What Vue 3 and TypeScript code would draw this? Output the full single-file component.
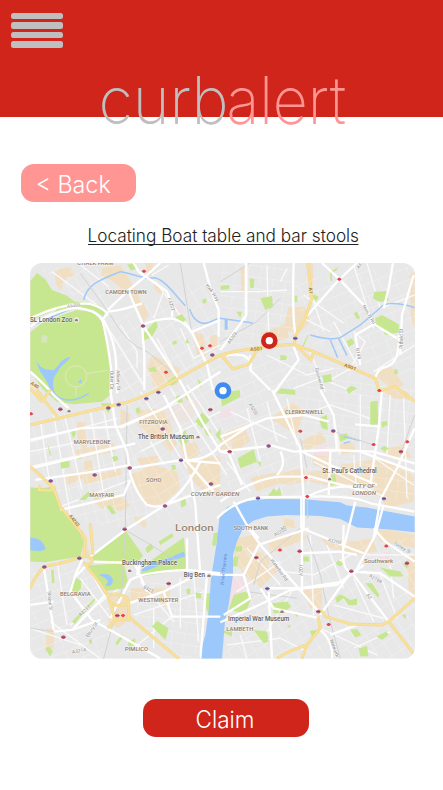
<script setup lang="ts">
interface Label { t: string; x: number; y: number; w: number; r?: number; k?: string }

// Map geometry is in map units, three to a pixel.
const districts: { p: string; f: string }[] = [
  { p: '30,500 290,440 345,590 420,790 330,820 180,800 90,680 30,620', f: 'west' },
  { p: '290,340 600,300 620,700 440,800 350,650', f: 'diag' },
  { p: '600,300 820,290 850,720 620,720', f: 'diag2' },
  { p: '820,280 1183,400 1183,740 850,720', f: 'west2' },
  { p: '600,24 820,24 820,260 600,280', f: 'west2' },
  { p: '270,200 560,60 600,290 380,410 290,410', f: 'diag' },
  { p: '820,80 1183,24 1183,370 850,260', f: 'diag2' },
  { p: '30,940 200,930 300,1090 240,1211 30,1211', f: 'diag2' },
  { p: '320,990 560,950 550,1200 480,1211 340,1090', f: 'west2' },
  { p: '650,870 1183,850 1183,1211 620,1211', f: 'diag' },
  { p: '60,40 260,40 290,180 180,140', f: 'diag' },
]

const buildings: string[] = [
  '105,45 150,35 165,65 140,65 120,105 105,85', '245,40 300,30 350,110 370,160 350,165 325,120 280,80 240,60',
  '375,24 400,24 390,65 380,55', '400,80 435,105 430,125 400,100', '515,230 550,240 560,310 530,300', '570,240 590,240 590,285 568,285',
  '350,150 370,145 385,180 370,200', '395,300 480,340 470,390 400,395 380,340', '660,40 675,35 678,110 664,115',
  '805,155 855,155 870,200 830,240 790,220', '720,235 800,205 805,250 730,265', '860,24 878,24 880,90 866,90', '1168,60 1183,50 1183,220 1172,200',
  '1060,360 1110,330 1150,390 1120,405', '1070,400 1160,410 1183,435 1120,430', '300,460 330,480 320,520 300,510',
  '355,465 430,460 450,530 400,550 350,510', '400,510 445,490 470,570 450,595 415,545', '170,500 195,500 200,590 170,560',
  '165,585 280,565 285,590 170,610', '190,620 215,615 220,660 300,640 305,660 190,690', '130,660 185,645 190,670 140,690', '330,655 400,630 470,650 480,700 430,745 385,755 350,710',
  '490,620 600,600 600,720 560,720 520,680', '475,570 525,560 540,595 500,620', '350,610 420,600 410,625 360,630', '215,705 255,730 250,765 220,740',
  '240,745 300,720 330,750 300,770', '620,530 670,510 690,560 640,590', '750,490 820,440 850,470 830,540 780,510', '840,560 900,530 920,560 860,585',
  '600,540 625,530 630,580 600,590', '690,670 780,650 790,680 710,710', '700,665 850,640 860,680 800,690', '870,600 930,590 925,640 880,630',
  '860,650 1000,640 1010,680 960,700 870,680', '960,630 1080,610 1180,660 1180,740 1100,760 1060,700 990,690', '1090,580 1150,570 1175,610 1100,610',
  '950,570 1000,560 1005,590 960,600', '645,850 700,840 720,870 640,930', '640,910 720,890 750,910 740,950 700,990 650,930', '790,790 820,795 825,820 790,815',
  '740,860 840,830 860,850 750,895', '900,850 1000,860 1060,850 1070,890 1010,900 930,880', '1060,815 1183,840 1183,880 1080,860', '1160,900 1183,900 1183,1020 1165,1010',
  '280,1050 320,1035 335,1090 290,1120 260,1100', '260,1020 325,1020 330,1045 280,1040', '330,1000 450,1000 445,1050 430,1060 415,1020 330,1040',
  '80,1120 100,1120 100,1180 75,1190', '165,810 190,830 210,900 190,905', '340,780 380,800 375,820 345,800', '705,970 770,920 780,940 720,1000', '845,1000 905,1000 905,1060 870,1060',
]

const parks: string[] = [
  '30,78 50,54 75,73 95,105 140,122 172,148 115,158 62,182 30,198', '125,140 190,140 235,150 255,165 250,185 220,165 170,155 90,190',
  '30,232 62,206 120,182 170,165 220,172 244,200 260,250 270,340 268,420 245,440 160,448 110,440 65,400 30,350',
  '30,697 62,700 92,695 120,755 175,828 190,860 180,905 72,922 30,920', '315,826 368,902 345,932 222,918 214,906', '202,932 310,924 322,975 312,1000 258,1008 225,970',
  '360,955 398,912 490,848 500,942 355,966', '365,240 408,195 412,215 395,245 370,258', '465,185 485,178 498,195 480,205', '545,135 556,130 560,142 549,147',
  '500,250 508,265 495,265', '440,380 465,360 475,378 455,392', '385,340 405,335 410,350 390,350', '530,370 545,385 540,400', '455,260 468,255 470,265 460,270',
  '320,29 345,24 350,42 332,46', '720,130 755,123 758,155 735,165', '648,170 665,170 660,188', '688,70 702,72 700,98 690,100', '600,92 628,90 625,103 602,105', '880,118 896,125 888,138 878,130',
  '822,122 831,122 831,142 823,142', '930,50 955,35 950,45 935,55 935,77 930,77', '1062,110 1100,108 1105,138 1075,140 1058,130', '1065,190 1085,180 1135,208 1137,232 1095,240 1085,222 1065,218',
  '1000,175 1010,170 1020,190 1010,192', '978,258 995,250 1003,265 985,276', '845,275 862,240 865,240 850,275', '780,300 800,302 797,315 780,315', '700,280 720,272 722,287 702,290',
  '905,362 932,357 935,380 910,383', '978,402 993,392 1010,400 985,417', '1122,343 1132,343 1132,357 1122,357', '768,415 782,400 825,405 825,420', '600,415 658,405 660,425 605,455',
  '1050,440 1072,437 1072,465 1077,508 1050,510', '1083,500 1100,498 1102,510 1085,518', '895,490 920,480 922,525 905,520', '955,540 980,535 985,550 960,560', '1080,580 1092,573 1105,580 1093,590',
  '652,610 700,583 710,620 660,640', '710,620 722,620 722,635', '745,720 760,700 770,710 778,695 785,728 745,730', '928,660 945,658 948,690 925,690',
  '525,500 545,472 568,495 545,520', '550,520 570,525 575,545 558,540', '475,555 495,523 505,560 485,572', '465,425 480,420 488,440 475,445', '490,415 502,412 512,430 500,435',
  '585,540 600,520 602,560', '150,523 165,523 166,540 158,550', '175,735 205,710 210,720 195,735', '120,622 147,618 148,636 122,641', '275,607 282,602 293,605 293,615 280,620', '170,602 182,600 185,610 173,612',
  '258,755 270,750 288,775 275,778', '80,560 92,600 88,603', '240,445 275,445 265,475', '345,462 357,456 360,470 350,478', '453,630 465,630 467,643 455,645', '480,740 495,730 498,750 482,758',
  '150,995 155,975 170,970 182,978 182,1000 170,1012 158,1010', '395,1115 410,1098 445,1120 435,1155', '555,1015 572,1015 570,1090 555,1055', '498,1002 510,1000 510,1018 500,1018', '525,1013 543,1015 543,1030 528,1030',
  '92,945 100,945 102,985 95,985', '75,1180 85,1175 98,1190 88,1205', '285,1165 305,1138 310,1145 290,1172', '323,1160 345,1150 345,1170 325,1175', '155,1100 222,1030 225,1035 162,1108', '205,1155 215,1153 215,1165 208,1168',
  '415,860 455,835 460,845 420,870', '580,835 595,832 585,875 575,870', '375,880 392,865 400,880 380,895', '645,875 665,873 665,890 645,890', '640,905 655,905 650,935 635,935',
  '640,1020 675,1010 695,1025 675,1075 625,1065', '755,1045 800,1040 812,1055 790,1075 760,1075', '845,905 865,905 867,920 850,920', '945,1030 958,1018 975,1025 950,1045', '963,1020 990,1035 1010,1030 1010,1050 985,1050',
  '945,925 955,915 970,928 958,935', '1035,985 1055,985 1078,1020 1072,1028', '1080,938 1140,950 1150,965 1110,965', '1145,925 1165,930 1160,942', '1068,1145 1098,1130 1105,1140 1085,1155', '1015,1180 1040,1173 1045,1205 1020,1205',
  '990,1125 1010,1122 1023,1140 1005,1148', '868,1128 888,1125 890,1140 875,1145', '822,1077 832,1075 833,1088', '600,1130 635,1125 635,1145', '700,1125 740,1130 745,1160 730,1165', '1145,1080 1157,1078 1155,1093', '800,1110 812,1112 808,1120',
]

const water: string[] = [
  'M598 785L620 757L660 740L740 732L850 733L960 742L980 752L1040 758L1183 785V832L1100 823L1010 818L960 792L900 783L800 780L740 785L700 797L668 820L650 860L638 900L638 960L625 1050L614 1100L605 1211H535L555 1140L565 1070L572 970L588 870Z',
  'M46 318C65 345 80 345 100 345C120 330 120 310 150 306C150 315 120 330 112 350C95 370 95 390 105 420L90 415C88 385 70 365 60 350Z', 'M30 848Q65 848 76 880Q70 892 30 886Z',
  'M362 945C390 920 430 920 470 898L490 890L495 905L460 915C420 925 390 948 365 950Z', 'M235 960Q270 950 278 975Q275 1000 255 990Q275 975 235 960Z', 'M613 192H622V224H613Z', 'M172 382L183 373V385Z',
]
const streams: string[] = ['M190 135C200 85 250 70 300 50C340 55 370 75 400 68C430 70 460 115 495 152', 'M508 162C515 185 530 205 555 205C570 205 580 192 600 190L698 204', 'M870 240C900 250 940 255 960 248L1020 210L1090 150Q1120 138 1183 158', 'M930 255L952 308M955 250L980 302', 'M95 405C110 435 150 450 205 415', 'M30 212Q90 190 170 152', 'M970 545L1018 557M970 565L990 560']

const minor: string[] = [
  'M60 500L90 700', 'M100 480L150 780', 'M132 478L185 705', 'M30 560L290 490', 'M30 635L310 570', 'M30 590L180 560', 'M120 755L330 675', 'M210 470L250 720', 'M250 470L285 650',
  'M95 50L270 180', 'M180 30L265 95', 'M270 230L370 390', 'M300 210L350 290V340', 'M405 80L520 235', 'M410 250L490 400', 'M430 110L400 190', 'M445 30L395 60', 'M480 220L520 310L600 270', 'M360 410L500 640', 'M450 400L620 660', 'M500 390L640 600', 'M300 520L480 440', 'M360 590L600 470', 'M390 560L430 630',
  'M600 110H720L800 105', 'M675 24V200', 'M740 30L745 230', 'M780 80L800 40', 'M850 120L970 205', 'M870 110L910 230', 'M850 190L930 230', 'M1000 30L1060 220', 'M1040 24L1080 160L1183 120', 'M1000 230L1035 260L990 340', 'M1060 350L1183 270', 'M940 200L1010 330L920 380', 'M740 300L860 360L940 340', 'M820 400L900 370L1000 410', 'M870 290L915 410',
  'M630 470L800 550', 'M680 460L720 620', 'M740 440L770 560', 'M800 430L830 570', 'M850 480L930 450L1050 490', 'M940 480L960 600', 'M1020 420L1020 640', 'M1110 420L1100 600', 'M1150 430L1160 730', 'M880 620L1100 730', 'M1000 600L1010 720', 'M1050 600L1180 690', 'M620 620L690 710',
  'M110 920L140 1110', 'M150 1110L310 990', 'M90 1100L240 1211', 'M30 1120L180 1170', 'M180 970L270 1090', 'M210 950L255 1030', 'M340 1080L550 1010', 'M360 980L460 1100', 'M480 970V1120', 'M520 960L535 1160', 'M400 1060V1180', 'M340 1180L460 1080',
  'M680 880L780 990', 'M650 1010L780 920', 'M740 1130L820 1000', 'M790 950L880 960L990 900', 'M870 840L880 1080', 'M920 870L970 1000', 'M940 1050L1090 1090', 'M1000 970L1060 1100', 'M1040 900L1183 900', 'M1080 960L1130 1090', 'M1110 930L1120 1030', 'M620 1170L780 1150L860 1190', 'M900 1120L1070 1200', 'M660 1140L680 1211', 'M1000 1180L1110 1130',
]

const roads: string[] = [
  'M30 215C60 190 120 165 165 158Q230 165 245 195L262 175Q230 145 190 145Q110 150 30 190', 'M30 350Q75 390 105 425L145 460', 'M245 190Q262 260 272 340L272 415', 'M250 195Q285 260 287 320L290 415', 'M262 165L325 105L380 60L420 24', 'M262 170Q310 165 365 145', 'M325 110L370 215L480 380L545 500L600 590', 'M365 210L372 300V405',
  'M365 210Q410 190 455 190Q495 200 515 232L560 330L578 405', 'M340 24L355 50Q400 80 440 110L455 150V185', 'M550 24L570 100L595 165V245', 'M510 232L600 195', 'M600 285L650 220L678 180V24', 'M820 24Q815 170 825 240', 'M905 24L955 70L1030 150L1065 210L1130 250', 'M855 188L955 75L1010 24', 'M1118 24L1105 100L1090 160',
  'M1180 60L1145 180L1140 300', 'M1065 205L1005 240L1020 330', 'M1135 240Q1140 320 1100 335Q1070 340 1065 370', 'M820 275L835 315L760 415', 'M690 300L690 345L750 405', 'M620 300Q700 290 690 345', 'M270 405L285 510L320 590L330 660Q350 720 380 750Q410 760 435 750', 'M30 555L180 520L300 515L430 460L600 350', 'M30 640L240 590L345 565', 'M45 675L220 650L330 630', 'M328 640L485 615L600 625', 'M430 420L480 520L500 620L580 710', 'M485 615Q560 620 600 570L690 510', 'M435 750Q490 715 540 620', 'M120 765L310 720L330 675', 'M210 905L315 825L435 750L600 690', 'M510 660L525 750L540 960',
  'M600 590L755 572L820 590L925 585L1060 590L1183 625', 'M600 545Q640 530 740 490L850 480L925 500', 'M755 405L840 580L850 730V820', 'M900 405L940 480L950 585L930 590L925 720', 'M845 590L930 630L1070 690', 'M1085 405L1075 520L1050 690', 'M1183 520L1130 640L1080 735L1060 850', 'M780 590Q800 630 770 660', 'M600 590L625 595L665 690', 'M600 740Q700 670 780 665L870 665L1040 710', 'M590 790Q650 730 730 727L860 725Q1000 720 1050 745L1183 770', 'M1005 508L1080 515', 'M860 725Q930 690 1000 695',
  'M640 740L685 820L720 870', 'M843 725V820', 'M1005 740L970 880', 'M1090 750L1065 840L1000 960', 'M1183 650L1020 590',
  'M70 935L100 1125', 'M30 1050L100 1040', 'M185 915L165 960L150 1010L215 1095L260 1120L420 1211', 'M220 920L360 925L350 960', 'M200 930L165 965', 'M270 1090L330 975Q370 950 500 945L600 955', 'M345 930L380 1010', 'M325 1045L430 1010L540 955L600 960', 'M430 1010L455 1085H600', 'M560 960L540 1211', 'M500 850V960', 'M100 1130L155 1125L240 1095', 'M255 1020L160 1120',
  'M600 960H670L690 1030L610 1080', 'M600 1102Q720 1050 810 1005L950 990L1030 930', 'M720 870L800 960L895 1070', 'M670 960L715 870L865 820', 'M720 1000L760 1060L900 1090', 'M740 1000H840Q900 990 970 980', 'M845 810V1010', 'M845 820L990 880L1030 895', 'M993 950L900 1080', 'M993 950L1060 1040L1105 1100', 'M995 950L1080 955L1183 1025', 'M970 810L968 900Q970 950 993 950', 'M1060 820L1095 860L1183 920', 'M715 850L680 810', 'M745 1010L755 1211', 'M900 1125Q940 1160 935 1211', 'M930 1140L1010 1110', 'M840 895L960 890L1010 900',
]

const gold: string[] = [
  'M30 510L220 465L320 442Q370 425 410 405L600 300Q700 275 820 268', 'M862 24Q868 70 875 130L855 190L823 245V265', 'M820 268L880 290L1065 370L1077 408L1125 395L1183 440', 'M603 300L638 342L685 328L710 285', 'M825 270L872 315L880 292', 'M50 405L75 440L110 485', 'M90 405L65 440', 'M30 400L65 440', 'M30 635L58 660L100 700L120 755L180 830', 'M60 690L55 705L90 707L105 695', 'M165 810L195 850L190 905L120 925L72 935Q45 960 30 1000', 'M190 905Q205 900 217 915Q210 935 192 925L235 980L262 1020L285 1095L330 1090L475 1211', 'M262 1020Q310 1010 325 1040V1100', 'M285 1095L262 1120', 'M325 1045Q290 1060 270 1040', 'M893 1070Q905 1060 915 1085L990 1107L1085 1110L1105 1100L1183 1030', 'M1105 1100L1183 1200', 'M893 1085L900 1120L860 1170Q800 1190 770 1211', 'M860 1170L845 1211', 'M210 805L218 900',
]
const rails: string[] = ['M180 55L270 180Q320 270 380 290L480 370', 'M480 24L500 150L515 235', 'M600 80L690 24', 'M600 260L710 200L780 130', 'M320 450L315 820L305 1000L250 1211', 'M315 825L500 935', 'M700 990L720 920L840 820', 'M860 840L900 960L925 1080L960 1211', 'M840 550L860 640', 'M1183 480L1140 600', 'M940 530L1060 570', 'M30 1120L100 1130', 'M860 725L862 790', 'M680 1010L830 1030']

const labels: Label[] = [
  { t: 'CHALK FARM', x: 171, y: 31, w: 108 }, { t: 'CAMDEN TOWN', x: 255, y: 118, w: 124 }, { t: 'SL London Zoo', x: 29, y: 201, w: 127, k: 'poi' },
  { t: 'FITZROVIA', x: 357, y: 507, w: 85 }, { t: 'The British Museum', x: 353, y: 551, w: 168, k: 'poi' }, { t: 'MARYLEBONE', x: 160, y: 566, w: 111 }, { t: 'SOHO', x: 377, y: 681, w: 46 }, { t: 'MAYFAIR', x: 207, y: 725, w: 74 },
  { t: 'COVENT GARDEN', x: 511, y: 724, w: 146, k: 'ital' }, { t: 'London', x: 464, y: 827, w: 116, k: 'city' }, { t: 'CLERKENWELL', x: 794, y: 478, w: 116 }, { t: 'St. Paul’s Cathedral', x: 906, y: 655, w: 163, k: 'poi' },
  { t: 'CITY OF', x: 997, y: 699, w: 66, k: 'ital' }, { t: 'LONDON', x: 996, y: 720, w: 71, k: 'ital' }, { t: 'SOUTH BANK', x: 640, y: 824, w: 104 }, { t: 'Buckingham Palace', x: 305, y: 931, w: 165, k: 'poi' }, { t: 'Big Ben', x: 490, y: 967, w: 64, k: 'poi' },
  { t: 'BELGRAVIA', x: 119, y: 1023, w: 92 }, { t: 'WESTMINSTER', x: 354, y: 1040, w: 120 }, { t: 'PIMLICO', x: 314, y: 1189, w: 69 }, { t: 'Southwark', x: 1031, y: 923, w: 88, k: 'area' }, { t: 'Imperial War Museum', x: 623, y: 1098, w: 184, k: 'poi' }, { t: 'LAMBETH', x: 618, y: 1127, w: 81 },
  { t: 'A5205', x: 141, y: 158, w: 40, r: -6, k: 'rd' }, { t: 'York Way', x: 555, y: 90, w: 60, r: 55, k: 'rd' }, { t: 'A5202', x: 442, y: 130, w: 40, r: 72, k: 'rd' }, { t: 'Outer Cir', x: 269, y: 348, w: 56, r: 90, k: 'rd' }, { t: 'Albany St', x: 288, y: 346, w: 60, r: 88, k: 'rd' },
  { t: 'A5203', x: 628, y: 268, w: 40, r: -55, k: 'rd' }, { t: 'A501', x: 690, y: 288, w: 37, r: -5, k: 'gold' }, { t: 'A1', x: 866, y: 98, w: 18, r: 85, k: 'gold' }, { t: 'A501', x: 970, y: 334, w: 38, r: 20, k: 'gold' }, { t: 'New N Rd', x: 1026, y: 153, w: 64, r: 60, k: 'rd' }, { t: 'Pitfield St', x: 1148, y: 281, w: 60, r: -90, k: 'rd' },
  { t: 'B144', x: 1006, y: 280, w: 34, r: 80, k: 'rd' }, { t: 'Goswell Rd', x: 884, y: 340, w: 66, r: 75, k: 'rd' }, { t: 'A1', x: 1015, y: 42, w: 16, r: -48, k: 'rd' }, { t: 'A5200', x: 685, y: 448, w: 40, r: 60, k: 'rd' }, { t: 'A4202', x: 145, y: 783, w: 42, r: 52, k: 'gold' }, { t: 'A40', x: 30, y: 387, w: 26, r: 35, k: 'gold' },
  { t: 'Sloane St', x: 81, y: 1010, w: 58, r: 84, k: 'rd' }, { t: 'A3217', x: 180, y: 1085, w: 42, r: -42, k: 'rd' }, { t: 'Ebury St', x: 203, y: 1148, w: 52, r: -55, k: 'rd' }, { t: 'A3214', x: 156, y: 1196, w: 42, r: -10, k: 'rd' }, { t: 'B323', x: 368, y: 999, w: 32, r: 28, k: 'rd' },
  { t: 'River Thames', x: 610, y: 990, w: 94, r: -84, k: 'river' }, { t: 'A3200', x: 764, y: 845, w: 40, r: -28, k: 'rd' }, { t: 'A3200', x: 922, y: 859, w: 40, r: 13, k: 'rd' }, { t: 'Waterloo Rd', x: 750, y: 915, w: 78, r: 55, k: 'rd' }, { t: 'A201', x: 848, y: 963, w: 34, r: -90, k: 'rd' }, { t: 'Tooley St', x: 1118, y: 867, w: 58, r: 30, k: 'rd' },
  { t: 'A2198', x: 1045, y: 965, w: 42, r: 30, k: 'rd' }, { t: 'A2', x: 1037, y: 1020, w: 18, r: 55, k: 'rd' }, { t: 'Walworth', x: 928, y: 1155, w: 56, r: 70, k: 'rd' }, { t: '5G', x: 783, y: 827, w: 16, r: -20, k: 'rd' },
]

const tube: number[][] = [[368, 213], [576, 300], [414, 412], [295, 449], [264, 459], [378, 431], [120, 463], [427, 522], [570, 464], [482, 616], [328, 639], [223, 660], [91, 678], [572, 687], [434, 753], [313, 823], [628, 590], [745, 573], [939, 528], [1142, 590], [1091, 731], [713, 730], [825, 250], [177, 910], [72, 936], [129, 1147], [291, 1082], [445, 986], [838, 889], [708, 908], [993, 949], [741, 1001], [894, 1070], [1160, 925]]
const rail: number[][] = [[371, 49], [545, 280], [569, 273], [437, 352], [957, 73], [1077, 407], [840, 529], [1060, 569], [1161, 561], [857, 668], [861, 725], [32, 477], [308, 1082], [779, 886], [1098, 874], [925, 1109]]
const sights: number[][] = [[168, 195], [533, 546], [928, 672], [328, 947], [566, 962], [785, 1070], [146, 468]]
</script>

<template>
  <div class="screen">
    <header class="top">
      <button class="menu" aria-label="Menu"><i /><i /><i /><i /></button>
      <svg class="logo" viewBox="0 0 250 66" aria-label="curbalert">
        <text class="curb" x="-.5" y="54" textLength="130" lengthAdjust="spacingAndGlyphs">curb</text>
        <text class="alert" x="127.5" y="54" textLength="119.5" lengthAdjust="spacingAndGlyphs">alert</text>
      </svg>
    </header>

    <main class="content">
      <button class="btn back">
        <svg viewBox="0 0 114 38"><text x="14.5" y="28.5" textLength="75" lengthAdjust="spacingAndGlyphs">&lt; Back</text></svg>
      </button>
      <svg class="title" viewBox="0 0 280 26">
        <text x="4.5" y="18" textLength="271.5" lengthAdjust="spacingAndGlyphs">Locating Boat table and bar stools</text>
        <path d="M5 20.5H275.5" />
      </svg>

      <svg class="map" viewBox="29 24 1155 1187">
        <defs>
          <pattern id="west" width="30" height="42" patternUnits="userSpaceOnUse" patternTransform="rotate(-14)"><path d="M0 0H30M0 0V42" /></pattern>
          <pattern id="west2" width="38" height="34" patternUnits="userSpaceOnUse" patternTransform="rotate(8)"><path d="M0 0H38M0 0V24" /></pattern>
          <pattern id="diag" width="34" height="46" patternUnits="userSpaceOnUse" patternTransform="rotate(-32)"><path d="M0 0H34M0 0V46" /></pattern>
          <pattern id="diag2" width="46" height="36" patternUnits="userSpaceOnUse" patternTransform="rotate(-22)"><path d="M0 0H46M0 0V26" /></pattern>
        </defs>
        <rect x="29" y="24" width="1155" height="1187" fill="#e8e8e8" />
        <g fill="#f1dfc4"><polygon v-for="(b, i) in buildings" :key="i" :points="b" /></g>
        <polygon points="430,470 500,415 540,450 510,500 455,500" fill="#ebe4df" />
        <g fill="#f3dfe6">
          <polygon points="890,570 920,570 924,605 885,600" /><polygon points="460,155 480,148 485,170 462,180" /><polygon points="600,470 640,455 635,485 600,495" /><polygon points="632,970 670,970 668,1010 622,1060" /><polygon points="1070,910 1090,890 1110,895 1105,912" />
        </g>
        <g opacity=".5"><polygon v-for="(d, i) in districts" :key="i" :points="d.p" :fill="`url(#${d.f})`" /></g>
        <g class="minor"><path v-for="(d, i) in minor" :key="i" :d="d" /></g>
        <g fill="#c6e78f"><polygon v-for="(p, i) in parks" :key="i" :points="p" /></g>
        <g class="ring"><circle cx="167" cy="364" r="32" /><path d="M199 356L260 346M167 396V425" /></g>
        <path d="M65 240L82 242L78 265L62 262Z" fill="#d8e4bd" />
        <g fill="#9dc8fc"><path v-for="(w, i) in water" :key="i" :d="w" /></g>
        <g class="stream"><path v-for="(s, i) in streams" :key="i" :d="s" /></g>
        <g class="rails"><path v-for="(r, i) in rails" :key="i" :d="r" /></g>
        <g class="road"><path v-for="(r, i) in roads" :key="i" :d="r" /></g>
        <g class="gold-edge"><path v-for="(r, i) in gold" :key="i" :d="r" /></g>
        <g class="gold-road"><path v-for="(r, i) in gold" :key="i" :d="r" /></g>
        <g v-for="(s, i) in tube" :key="'t' + i">
          <circle :cx="s[0]" :cy="s[1]" r="5.8" fill="#d96874" /><rect :x="s[0] - 6.5" :y="s[1] - 2" width="13" height="4" fill="#5a539f" />
        </g>
        <path v-for="(s, i) in rail" :key="'r' + i" :d="`M${s[0] - 7} ${s[1]}l5-5h4l5 5l-5 4h-4z`" fill="#e8424b" />
        <g v-for="(s, i) in sights" :key="'s' + i">
          <circle :cx="s[0]" :cy="s[1]" r="8" fill="#f4ece9" /><path :d="`M${s[0] - 5} ${s[1] + 4}v-5l5-3l5 3v5z`" fill="#93817f" />
        </g>
        <text v-for="(l, i) in labels" :key="'l' + i" :class="['lab', l.k]" :x="l.x" :y="l.y" :textLength="l.w" lengthAdjust="spacingAndGlyphs" :transform="l.r ? `rotate(${l.r} ${l.x} ${l.y})` : undefined">{{ l.t }}</text>
        <circle cx="747" cy="257" r="18" class="pin" stroke="#d0251a" />
        <circle cx="608" cy="407" r="18" class="pin" stroke="#3f8bee" />
      </svg>

      <button class="btn claim">
        <svg viewBox="0 0 166 38"><text x="52.5" y="28.7" textLength="59" lengthAdjust="spacingAndGlyphs">Claim</text></svg>
      </button>
    </main>
  </div>
</template>

<style>
body { background: #fff; }
</style>

<style scoped>
.screen { width: 443px; height: 790px; overflow: hidden; background: #fff; font-family: Inter, "Liberation Sans", sans-serif; }
svg { display: block; }
button { border: 0; padding: 0; display: block; font-family: inherit; }
.top { height: 117px; box-sizing: border-box; padding-top: 13px; background: #d0251a; display: flex; flex-direction: column; }
.menu { width: 52.5px; margin-left: 10.5px; background: none; display: flex; flex-direction: column; gap: 3.2px; flex: none; }
.menu i { display: block; width: 52.5px; height: 6.3px; border-radius: 2.5px; background: #bfbfbf; }
.logo { width: 250px; height: 66px; margin: 22px 0 0 99px; flex: none; overflow: visible; }
.logo text { font-size: 66px; font-weight: 200; }
.curb { fill: #bfbfbf; }
.alert { fill: #ff9693; }
.content { display: flex; flex-direction: column; }
.btn { height: 38px; border-radius: 13px; }
.btn text { font-size: 23.5px; font-weight: 300; fill: #fff; }
.btn svg { width: 100%; height: 38px; }
.back { width: 114.4px; margin: 47.3px 0 0 21.3px; background: #ff9693; }
.title { width: 280px; height: 26px; margin: 21.7px 0 0 83px; overflow: visible; }
.title text { font-size: 18.2px; font-weight: 300; fill: #222; }
.title path { stroke: #222; stroke-width: 1; }
.map { width: 385px; height: 395.6px; margin: 13px 0 0 29.6px; border-radius: 12px; overflow: hidden; font-family: Roboto, sans-serif; }
.claim { width: 166px; margin: 40.8px 0 0 142.7px; background: #d0251a; }
pattern path { fill: none; stroke: #fff; stroke-width: 2.6; }
.minor, .road, .rails, .stream, .gold-edge, .gold-road, .ring { fill: none; stroke-linejoin: round; }
.minor { stroke: #fafafa; stroke-width: 4; }
.ring { stroke: #e0e9bd; stroke-width: 3; }
.stream { stroke: #a0c8f8; stroke-width: 4.5; }
.rails { stroke: #d2d2d2; stroke-width: 3; }
.road { stroke: #fff; stroke-width: 7; }
.gold-edge { stroke: #efd58c; stroke-width: 9; }
.gold-road { stroke: #fae19a; stroke-width: 6; }
.lab { font-size: 17px; font-weight: 500; fill: #8d7b68; stroke: #fff; stroke-opacity: .65; stroke-width: 3; paint-order: stroke; }
.poi { font-size: 19px; fill: #625c59; }
.ital { font-style: italic; }
.city { font-size: 29px; fill: #958775; }
.area { font-size: 18px; fill: #94816d; }
.rd { font-size: 14px; font-weight: 400; fill: #8b8b8b; }
.gold { font-size: 14px; fill: #8f7345; stroke: #fae19a; }
.river { font-size: 14px; font-weight: 400; fill: #5d8bc8; stroke: none; }
.pin { fill: #fff; stroke-width: 14; }
</style>
